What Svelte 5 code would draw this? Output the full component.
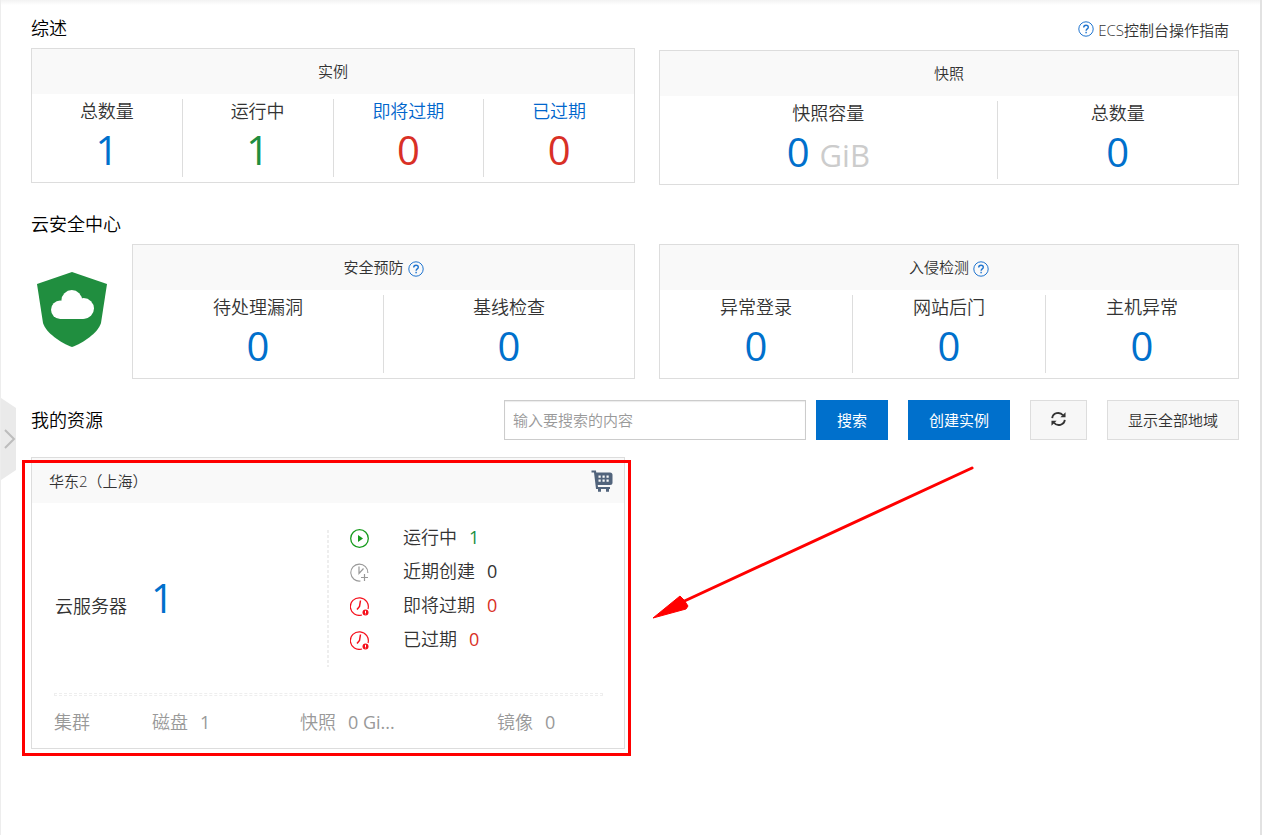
<script>
  const instances = [
    { label: '总数量', value: '1', tone: 'blue' },
    { label: '运行中', value: '1', tone: 'green' },
    { label: '即将过期', value: '0', tone: 'red', link: true },
    { label: '已过期', value: '0', tone: 'red', link: true }
  ];
  const snapshots = [
    { label: '快照容量', value: '0', unit: 'GiB', tone: 'blue', grow: 7 },
    { label: '总数量', value: '0', tone: 'blue', grow: 5 }
  ];
  const prevention = [
    { label: '待处理漏洞', value: '0', tone: 'blue' },
    { label: '基线检查', value: '0', tone: 'blue' }
  ];
  const intrusion = [
    { label: '异常登录', value: '0', tone: 'blue' },
    { label: '网站后门', value: '0', tone: 'blue' },
    { label: '主机异常', value: '0', tone: 'blue' }
  ];
  const statuses = [
    { icon: 'play', label: '运行中', value: '1', tone: 'green' },
    { icon: 'recent', label: '近期创建', value: '0', tone: '' },
    { icon: 'alert', label: '即将过期', value: '0', tone: 'red' },
    { icon: 'alert', label: '已过期', value: '0', tone: 'red' }
  ];
  const resources = [
    { label: '集群', value: '' },
    { label: '磁盘', value: '1' },
    { label: '快照', value: '0 Gi...' },
    { label: '镜像', value: '0' }
  ];
  let keyword = $state('');
</script>

{#snippet help()}
  <svg class="help" viewBox="0 0 16 16" width="16" height="16" aria-hidden="true">
    <circle cx="8" cy="8" r="7.2" fill="none" stroke="#1f74cf" stroke-width="1" />
    <path d="M5.7 6.4C5.7 4.9 6.7 4.2 8 4.2s2.3.8 2.3 2c0 1.7-2.2 1.7-2.2 3.5" fill="none" stroke="#1f74cf" stroke-width="1.4" />
    <rect x="7.4" y="10.8" width="1.4" height="1.5" fill="#1f74cf" />
  </svg>
{/snippet}

{#snippet panel(title, cells, hasHelp)}
  <div class="panel">
    <h3>{title}{#if hasHelp}{@render help()}{/if}</h3>
    <div class="cells">
      {#each cells as c}
        <div class="cell" style:flex-grow={c.grow ?? 1}>
          {#if c.link}
            <a class="label" href="#list">{c.label}</a>
          {:else}
            <div class="label">{c.label}</div>
          {/if}
          <div class="num {c.tone}">{c.value}{#if c.unit}<span class="unit">{c.unit}</span>{/if}</div>
        </div>
      {/each}
    </div>
  </div>
{/snippet}

<main>
  <button class="handle" aria-label="展开">
    <svg viewBox="0 0 15 82" width="15" height="82">
      <path d="M0 0L15 10V72L0 82Z" fill="#eaeaea" />
      <path d="M4 32L13 41L4 50" fill="none" stroke="#bdbdbd" stroke-width="2" />
    </svg>
  </button>

  <div class="row">
    <section>
      <h2>综述</h2>
      {@render panel('实例', instances, false)}
    </section>
    <section class="lowered">
      <a class="guide" href="#guide">{@render help()}<span>ECS控制台操作指南</span></a>
      {@render panel('快照', snapshots, false)}
    </section>
  </div>

  <section class="security">
    <h2>云安全中心</h2>
    <div class="row">
      <div class="shielded">
        <svg class="shield" viewBox="0 0 70 75" width="70" height="75" aria-hidden="true">
          <path d="M35 0L70 12L64 51C61 61 46 71 35 75C24 71 9 61 6 51L0 12Z" fill="#208e3f" />
          <g fill="#fff">
            <circle cx="23.200" cy="37.800" r="9.200" />
            <circle cx="34.800" cy="28.500" r="10.400" />
            <circle cx="46.600" cy="36.500" r="10.400" />
            <path d="M23 30H46V47H23Z" />
          </g>
        </svg>
        {@render panel('安全预防', prevention, true)}
      </div>
      {@render panel('入侵检测', intrusion, true)}
    </div>
  </section>

  <div class="toolbar">
    <h2>我的资源</h2>
    <input type="text" aria-label="搜索内容" placeholder="输入要搜索的内容" bind:value={keyword} />
    <button class="btn primary search">搜索</button>
    <button class="btn primary">创建实例</button>
    <button class="btn" aria-label="刷新">
      <svg viewBox="0 0 16 16" width="15" height="16">
        <path d="M1.300 7A6.400 6 0 0 1 12.800 4M14.700 9A6.400 6 0 0 1 3.200 12" fill="none" stroke="#333" stroke-width="2" />
        <path d="M15.500 .8V6.200H10ZM.5 15.200V9.800H6Z" fill="#333" />
      </svg>
    </button>
    <button class="btn">显示全部地域</button>
  </div>

  <div class="row">
    <div class="region">
      <article class="card">
        <header>
          <span>华东2（上海）</span>
          <svg viewBox="0 0 22 22" width="22" height="22" aria-hidden="true">
            <path d="M.5 1.500H4L6 18H19" fill="none" stroke="#52647c" stroke-width="2.200" />
            <path d="M4 2.500H19Q21.500 2.500 21.500 5V12.500Q21.500 15 19 15H5.500Z" fill="#52647c" />
            <path d="M7.500 5.500h2.200v2.200h-2.200zM11.500 5.500h2.200v2.200h-2.200zM15.500 5.500h2.200v2.200h-2.200zM7.500 9.500h2.200v2.200h-2.200zM11.500 9.500h2.200v2.200h-2.200zM15.500 9.500h2.200v2.200h-2.200z" fill="#f9f9f9" />
            <path d="M7 18.500h3v3.200h-3zM15 18.500h3v3.200h-3z" fill="#52647c" />
          </svg>
        </header>
        <div class="body">
          <div class="server"><span>云服务器</span><span class="num blue">1</span></div>
          <div class="rule"></div>
          <ul>
            {#each statuses as s}
              <li>
                <svg viewBox="0 0 20 20" width="20" height="20" aria-hidden="true">
                  {#if s.icon === 'play'}
                    <circle cx="9.500" cy="10.500" r="8.800" fill="none" stroke="#169b1c" stroke-width="1.300" />
                    <path d="M8 7L13 10.500L8 14Z" fill="#169b1c" />
                  {:else if s.icon === 'recent'}
                    <path d="M17.800 11A8.500 8.500 0 1 0 10.500 19" fill="none" stroke="#999" stroke-width="1.100" />
                    <path d="M9 4.500V11.500L13.500 6.500M14.500 12V19M11 15.500H18" fill="none" stroke="#999" stroke-width="1.200" />
                  {:else}
                    <path d="M18 13A9 8.800 0 1 0 12 19" fill="none" stroke="#f5101c" stroke-width="1.200" />
                    <path d="M10.500 4.500L9.500 10.500L7 13.500" fill="none" stroke="#f5101c" stroke-width="1.500" />
                    <circle cx="15.500" cy="16.500" r="3" fill="#f5101c" />
                    <path d="M15.500 14.800V17M15.500 17.600V18.300" stroke="#fff" stroke-width="1" />
                  {/if}
                </svg>
                <span>{s.label}</span>
                <span class={s.tone}>{s.value}</span>
              </li>
            {/each}
          </ul>
        </div>
        <div class="divider"></div>
        <footer>
          {#each resources as r}
            <div><span>{r.label}</span><span>{r.value}</span></div>
          {/each}
        </footer>
      </article>
      <div class="highlight"></div>
      <svg class="arrow" viewBox="0 0 322 154" width="322" height="154" aria-hidden="true">
        <path d="M320 2L26 138" stroke="#f00" stroke-width="3" stroke-linecap="round" />
        <path d="M1 152L28 130L32 134L36 140L34 143Z" fill="#f00" stroke="#f00" stroke-width="1" />
      </svg>
    </div>
  </div>
</main>

<style>
  :global(body) {
    margin: 0;
    background: #fff;
  }
  main {
    position: relative;
    box-sizing: border-box;
    min-height: 100vh;
    padding: 8px 21px 24px 30px;
    border-left: 1px solid #ededed;
    border-right: 2px solid #e2e2e2;
    background: linear-gradient(#f2f2f2, #fff 5px);
    color: #333;
    font-family: 'Open Sans', 'Noto Sans CJK SC', sans-serif;
    font-size: 18px;
    font-weight: 350;
    overflow: hidden;
  }
  .row {
    display: grid;
    grid-template-columns: 604fr 580fr;
    column-gap: 24px;
  }
  h2,
  h3 {
    margin: 0;
    font-weight: 350;
  }
  h2 {
    color: #000;
    font-size: 18px;
    line-height: 40px;
  }
  a {
    color: #06c;
    text-decoration: none;
  }
  .lowered {
    padding-top: 2px;
  }
  .guide {
    display: flex;
    justify-content: flex-end;
    align-items: center;
    gap: 4px;
    height: 38px;
    padding: 0 10px 2px 0;
    color: #333;
    font-size: 15px;
  }
  .panel {
    flex: 1;
    border: 1px solid #ddd;
  }
  h3 {
    display: flex;
    justify-content: center;
    align-items: center;
    gap: 4px;
    height: 43px;
    padding-bottom: 2px;
    background: #f9f9f9;
    font-size: 15px;
  }
  h3 .help {
    margin-top: 4px;
  }
  .cells {
    display: flex;
    padding: 5px 0;
  }
  .cell {
    flex: 1 1 0;
    text-align: center;
  }
  .cell + .cell {
    border-left: 1px solid #ddd;
  }
  .label {
    display: block;
    line-height: 24px;
  }
  .num {
    font-size: 40px;
    font-weight: 400;
    line-height: 54px;
  }
  .unit {
    margin-left: 10px;
    color: #ccc;
    font-size: 31px;
    line-height: 32px;
  }
  .blue {
    color: #0070cc;
  }
  .green {
    color: #208e3f;
  }
  .red {
    color: #d93026;
  }
  .security {
    margin-top: 19px;
  }
  .shielded {
    display: flex;
    align-items: center;
  }
  .shield {
    margin: 0 25px 4px 6px;
  }
  .toolbar {
    display: flex;
    margin: 21px 0 17px;
  }
  .toolbar h2 {
    flex: 1;
  }
  input,
  .btn {
    box-sizing: border-box;
    height: 40px;
    font-family: inherit;
    font-size: 15px;
  }
  input {
    flex: 0 1 302px;
    min-width: 0;
    padding: 0 8px;
    border: 1px solid #ccc;
    border-radius: 0;
    box-shadow: inset 0 1px 1px rgba(0, 0, 0, 0.08);
    font-weight: 350;
  }
  input::placeholder {
    color: #999;
  }
  .btn {
    margin-left: 20px;
    padding: 0 20px 2px;
    border: 1px solid #ddd;
    background: #f7f7f7;
    color: #333;
    font-weight: 350;
  }
  .btn svg {
    display: block;
  }
  .primary {
    border-color: #0070cc;
    background: #0070cc;
    color: #fff;
    font-weight: 400;
  }
  .search {
    margin-left: 10px;
  }
  .region {
    position: relative;
    margin-right: 10px;
  }
  .card {
    border: 1px solid #ddd;
  }
  header {
    display: flex;
    justify-content: space-between;
    align-items: center;
    height: 45px;
    padding: 0 11px 0 17px;
    background: #f9f9f9;
    font-size: 15px;
  }
  .body {
    display: grid;
    grid-template-columns: 1fr 2px 1fr;
    padding-bottom: 26px;
  }
  .server {
    display: flex;
    align-items: baseline;
    gap: 24px;
    padding: 68px 0 0 23px;
  }
  .rule {
    height: 137px;
    margin-top: 27px;
    background: repeating-linear-gradient(#eee 0 3px, transparent 3px 5px);
  }
  ul {
    margin: 0;
    padding: 17px 0 0 21px;
    list-style: none;
    line-height: 34px;
  }
  li {
    display: flex;
    align-items: center;
  }
  li svg {
    margin: 2px 33px 0 0;
  }
  li span + span,
  footer span + span {
    margin-left: 12px;
    font-weight: 400;
  }
  .divider {
    height: 1px;
    margin: 0 21px 0 22px;
    border: 1px dashed #eee;
  }
  footer {
    display: grid;
    grid-template-columns: 98fr 148fr 197fr 106fr;
    padding: 0 21px 0 22px;
    color: #999;
    line-height: 52px;
  }
  .highlight {
    position: absolute;
    inset: 3px -6px -7px -9px;
    border: 3px solid #f00;
  }
  .arrow {
    position: absolute;
    top: 9px;
    left: calc(100% + 27px);
  }
  .handle {
    position: absolute;
    top: 398px;
    left: 0;
    padding: 0;
    border: 0;
    background: none;
  }
  .handle svg {
    display: block;
  }
</style>
